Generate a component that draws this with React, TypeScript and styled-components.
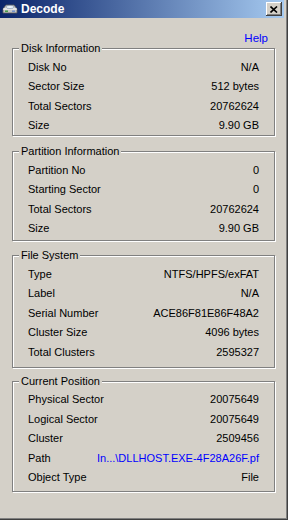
import React from 'react';
import styled, { createGlobalStyle } from 'styled-components';

const GlobalStyle = createGlobalStyle`
  html, body {
    margin: 0;
    padding: 0;
    background: #d4d0c8;
  }
  body {
    font-family: 'Liberation Sans', Arial, sans-serif;
    font-size: 11px;
    color: #000;
  }
`;

const Window = styled.div`
  width: 288px;
  height: 520px;
  box-sizing: border-box;
  display: flex;
  flex-direction: column;
  background: #d4d0c8;
  border-right: 1px solid #404040;
  border-bottom: 1px solid #404040;
  box-shadow: inset -1px -1px 0 #808080;
  padding: 0 3px 2px 0;
`;

const TitleBar = styled.div`
  height: 18px;
  display: flex;
  align-items: center;
  gap: 3px;
  padding: 0 2px 0 2px;
  background: linear-gradient(to right, #0a246a, #a6caf0);
  color: #fff;
`;

const TitleText = styled.span`
  flex: 1;
  font-weight: bold;
  font-size: 12px;
  line-height: 18px;
`;

const CloseButton = styled.button`
  width: 16px;
  height: 14px;
  padding: 0;
  box-sizing: border-box;
  background: #d4d0c8;
  border: none;
  box-shadow: inset -1px -1px 0 #404040, inset 1px 1px 0 #ffffff,
    inset -2px -2px 0 #808080, inset 2px 2px 0 #d4d0c8;
  display: flex;
  align-items: center;
  justify-content: center;
`;

const Body = styled.div`
  display: flex;
  flex-direction: column;
  padding-left: 12px;
`;

const HelpRow = styled.div`
  display: flex;
  justify-content: flex-end;
  margin-top: 13px;
  padding-right: 16px;
  line-height: 14px;
  font-size: 11.5px;
`;

const HelpLink = styled.a`
  color: #0000ff;
  text-decoration: none;
  cursor: pointer;
`;

const Group = styled.section<{ $top: number; $bottom: number }>`
  position: relative;
  width: 263px;
  box-sizing: border-box;
  margin-top: ${({ $top }) => $top}px;
  padding: 8px 15px ${({ $bottom }) => $bottom}px 15px;
  border: 1px solid #808080;
  box-shadow: inset 1px 1px 0 #ffffff, 1px 1px 0 #ffffff;
`;

const Caption = styled.span`
  position: absolute;
  left: 6px;
  top: -7px;
  padding: 0 2px;
  line-height: 13px;
  background: #d4d0c8;
`;

const Row = styled.div`
  display: flex;
  justify-content: space-between;
  align-items: center;
  height: 19.5px;
  white-space: nowrap;
`;

const Value = styled.span<{ $link?: boolean }>`
  color: ${({ $link }) => ($link ? '#0000ff' : '#000')};
`;

type Item = [string, string, boolean?];

interface SectionProps {
  title: string;
  items: Item[];
  top: number;
  bottom: number;
}

const Section: React.FC<SectionProps> = ({ title, items, top, bottom }) => (
  <Group $top={top} $bottom={bottom}>
    <Caption>{title}</Caption>
    {items.map(([label, value, link]) => (
      <Row key={label}>
        <span>{label}</span>
        <Value $link={link}>{value}</Value>
      </Row>
    ))}
  </Group>
);

const DiskIcon = () => (
  <svg width="16" height="16" viewBox="0 0 16 16">
    <path d="M1 8 L4 4 L12 4 L15 8 L15 12 L1 12 Z" fill="#c8c8c8" stroke="#5a5a5a" strokeWidth="0.8" />
    <path d="M1 8 L15 8" stroke="#ffffff" strokeWidth="1" />
    <ellipse cx="8" cy="6" rx="4" ry="1.6" fill="#e8f0f8" stroke="#7a8ea8" strokeWidth="0.6" />
    <rect x="3" y="9.5" width="3" height="1.4" fill="#3c9a3c" />
    <rect x="10" y="9.5" width="3" height="1.4" fill="#6a8ccc" />
  </svg>
);

const CloseGlyph = () => (
  <svg width="8" height="7" viewBox="0 0 8 7">
    <path d="M0.5 0.5 L7 6.5 M7 0.5 L0.5 6.5" stroke="#000" strokeWidth="1.6" />
  </svg>
);

const disk: Item[] = [
  ['Disk No', 'N/A'],
  ['Sector Size', '512 bytes'],
  ['Total Sectors', '20762624'],
  ['Size', '9.90 GB'],
];

const partition: Item[] = [
  ['Partition No', '0'],
  ['Starting Sector', '0'],
  ['Total Sectors', '20762624'],
  ['Size', '9.90 GB'],
];

const fileSystem: Item[] = [
  ['Type', 'NTFS/HPFS/exFAT'],
  ['Label', 'N/A'],
  ['Serial Number', 'ACE86F81E86F48A2'],
  ['Cluster Size', '4096 bytes'],
  ['Total Clusters', '2595327'],
];

const position: Item[] = [
  ['Physical Sector', '20075649'],
  ['Logical Sector', '20075649'],
  ['Cluster', '2509456'],
  ['Path', 'In...\\DLLHOST.EXE-4F28A26F.pf', true],
  ['Object Type', 'File'],
];

export default function App() {
  return (
    <>
      <GlobalStyle />
      <Window>
        <TitleBar>
          <DiskIcon />
          <TitleText>Decode</TitleText>
          <CloseButton>
            <CloseGlyph />
          </CloseButton>
        </TitleBar>
        <Body>
          <HelpRow>
            <HelpLink>Help</HelpLink>
          </HelpRow>
          <Section title="Disk Information" items={disk} top={3} bottom={0} />
          <Section title="Partition Information" items={partition} top={15} bottom={2} />
          <Section title="File System" items={fileSystem} top={14} bottom={5} />
          <Section title="Current Position" items={position} top={13} bottom={4} />
        </Body>
      </Window>
    </>
  );
}
